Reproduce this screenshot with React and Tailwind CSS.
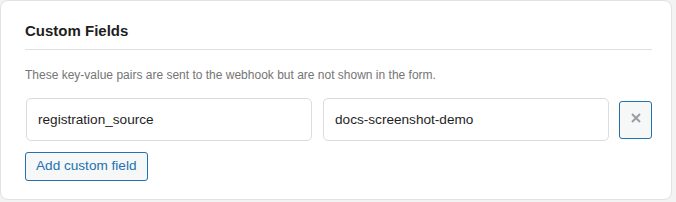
export default function App() {
    return (
        <div className="h-[202px] w-[676px] bg-[#f3f3f3]" style={{ fontFamily: "'Liberation Sans', Arial, sans-serif" }}>
            <div className="h-[200px] w-[672px] rounded-lg border border-[#e2e2e2] bg-white pl-6 pr-[19px]">
                <h2 className="pt-[19px] pb-[7px] text-[15px] font-bold leading-[22px] text-[#1e1e1e] border-b border-[#e0e0e0]">
                    Custom Fields
                </h2>
                <p className="mt-[16px] text-[12px] leading-[18px] text-[#757575]">
                    These key-value pairs are sent to the webhook but are not shown in the form.
                </p>
                <div className="mt-[14px] flex items-start">
                    <input
                        type="text"
                        defaultValue="registration_source"
                        className="ml-px h-[43px] w-[287px] rounded-[5px] border border-[#dcdcdc] px-[11px] text-[13.6px] text-[#1e1e1e] outline-none"
                    />
                    <input
                        type="text"
                        defaultValue="docs-screenshot-demo"
                        className="ml-[11px] h-[43px] w-[287px] rounded-[5px] border border-[#dcdcdc] px-[11px] text-[13.6px] text-[#1e1e1e] outline-none"
                    />
                    <button className="ml-[10px] mt-[3px] flex h-[38px] w-[33px] items-start justify-center rounded-[3px] border border-[#2271b1] bg-[#f6f7f7] pt-[11px] text-[#9a9da2]">
                        <svg width="10" height="10" viewBox="0 0 10 10" fill="none" stroke="currentColor" strokeWidth="2">
                            <path d="M1 1l8 8M9 1l-8 8" />
                        </svg>
                    </button>
                </div>
                <button className="mt-[11px] h-[29px] rounded-[3px] border border-[#2271b1] bg-[#f6f7f7] px-[10px] text-[13.6px] text-[#2271b1]">
                    Add custom field
                </button>
            </div>
        </div>
    )
}
